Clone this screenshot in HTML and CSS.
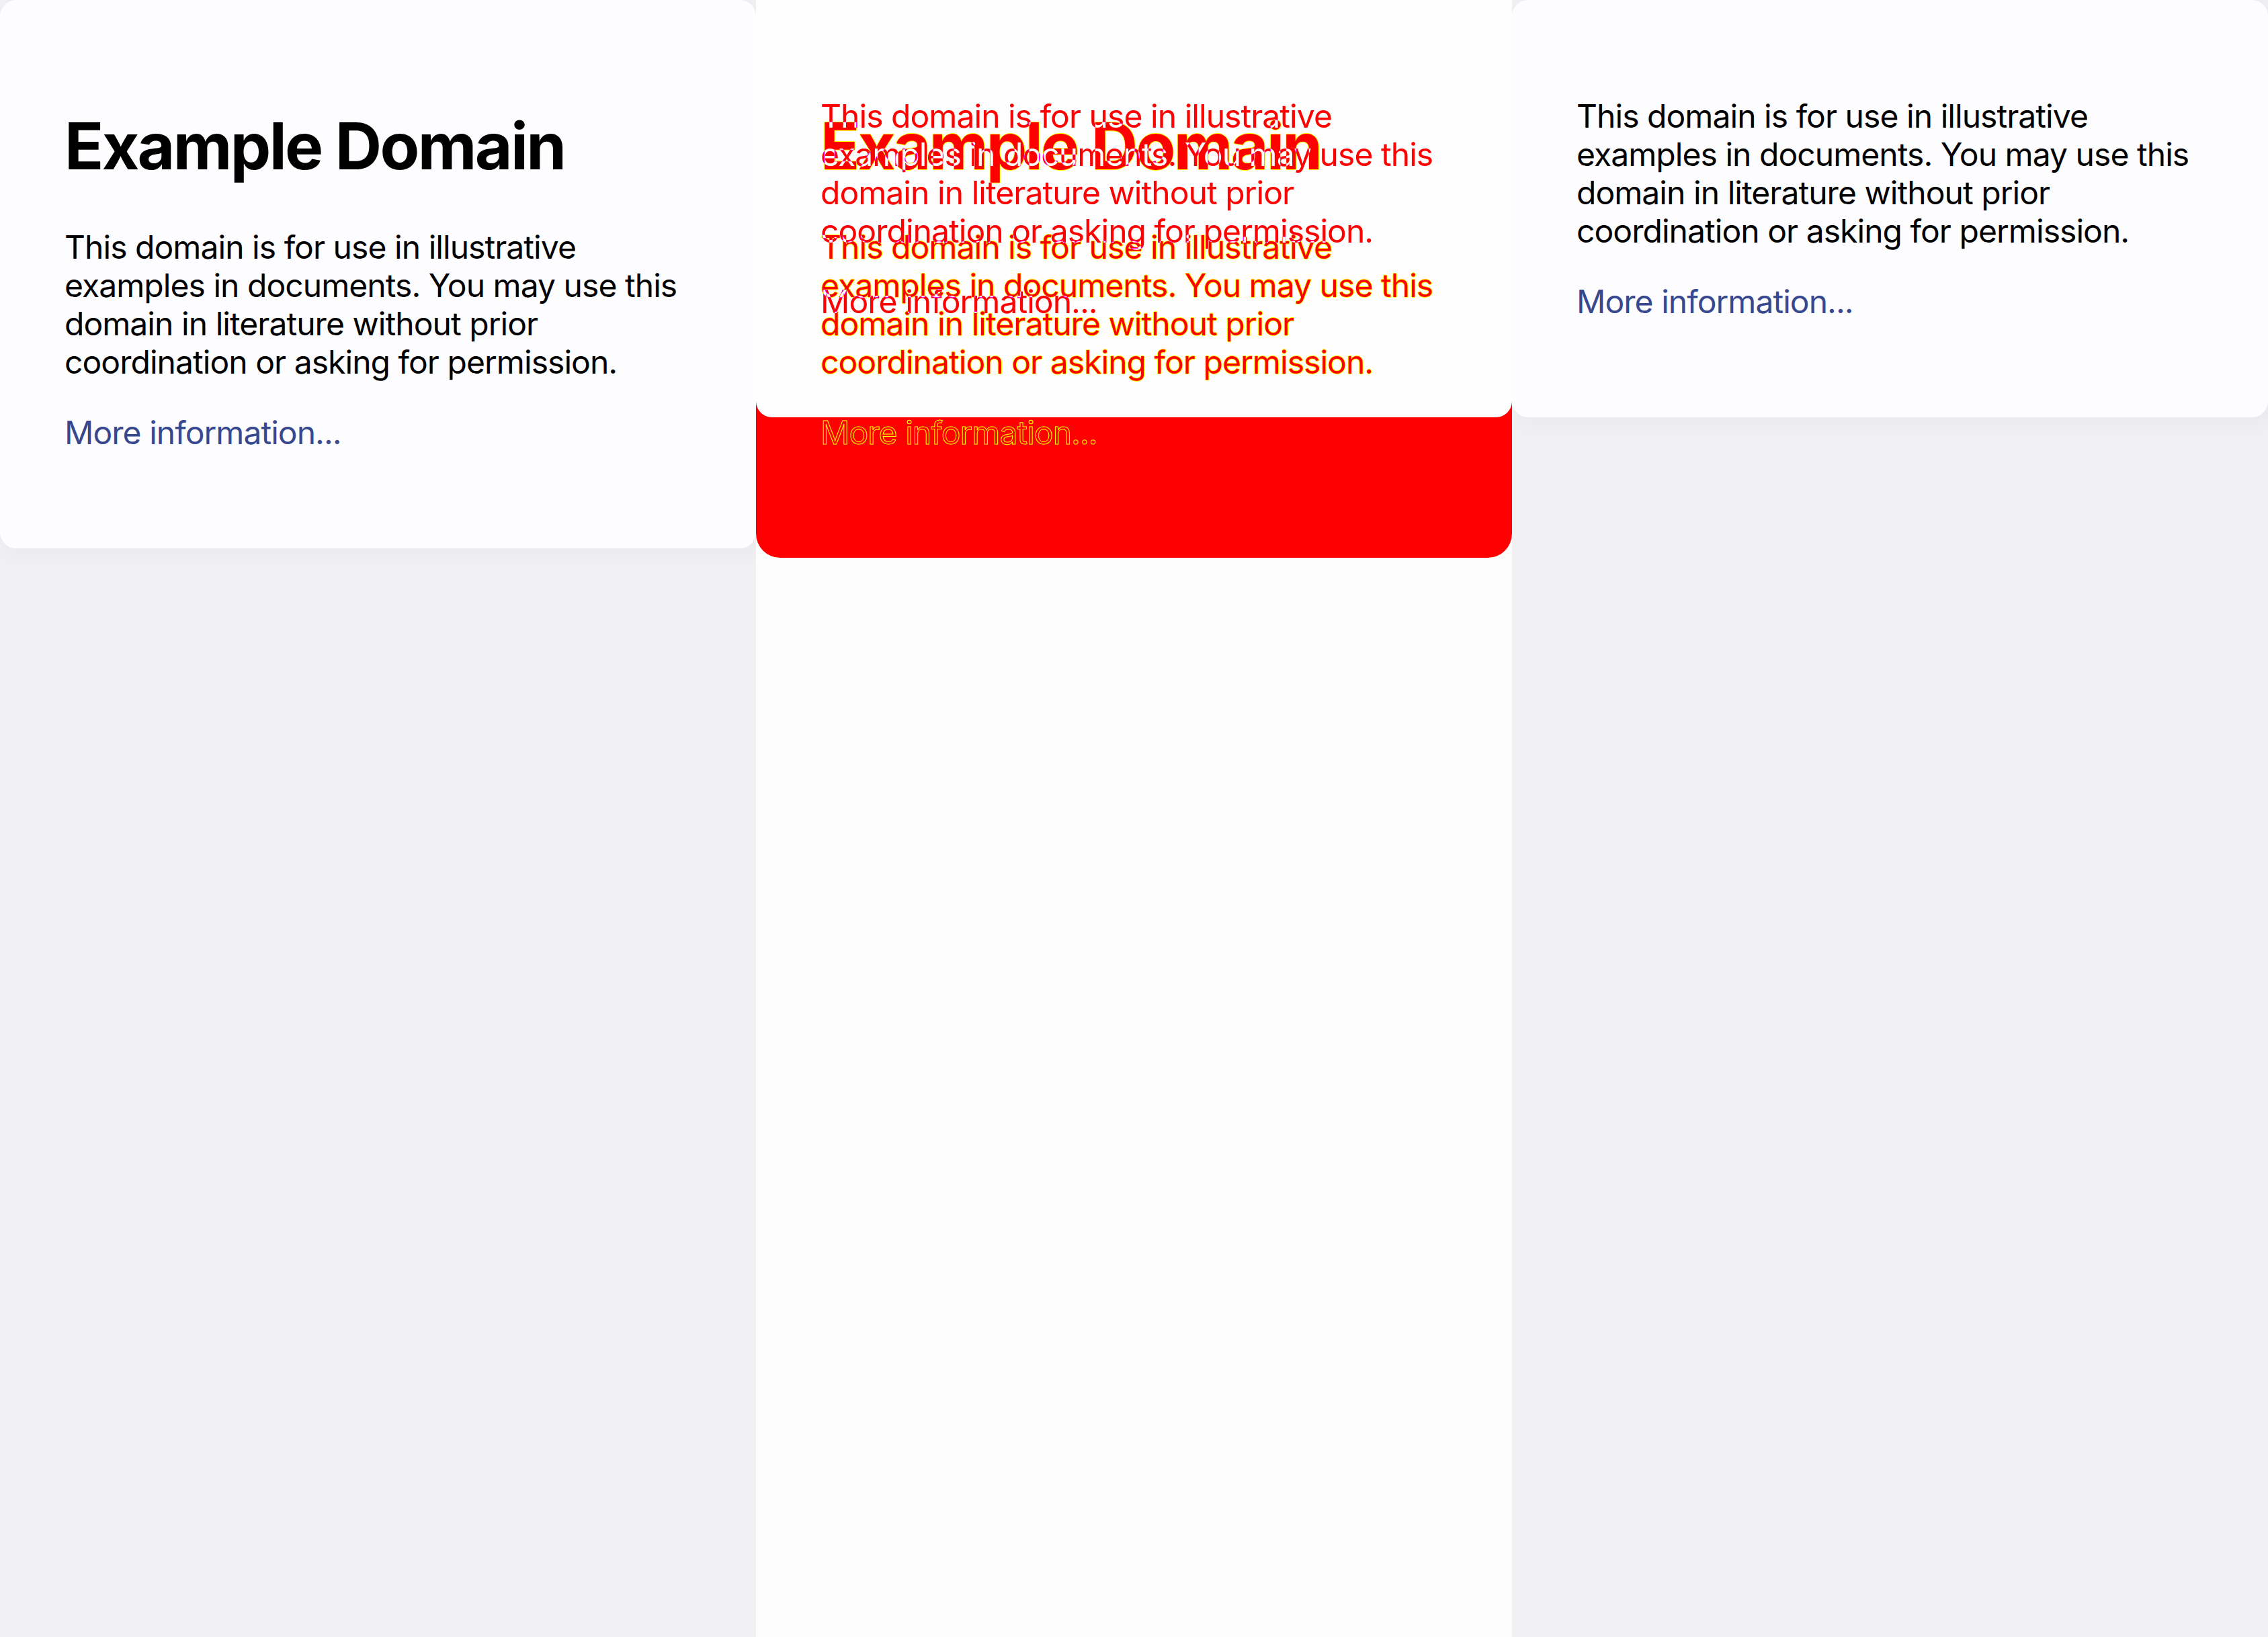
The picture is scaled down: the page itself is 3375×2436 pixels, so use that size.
FILE: index.html
```html
<!DOCTYPE html>
<html lang="en">
<head>
<meta charset="utf-8">
<title>Example Domain – comparison</title>
<link rel="stylesheet" href="styles.css">
</head>
<body>
<main class="shots">
  <section class="pane pane-ref">
    <div class="card">
      <h1>Example Domain</h1>
      <p>This domain is for use in illustrative examples in documents. You may use this domain in literature without prior coordination or asking for permission.</p>
      <p><a href="#">More information...</a></p>
    </div>
  </section>

  <section class="pane pane-diff">
    <div class="diff-stack">
      <div class="diff-red"></div>
      <div class="diff-same"></div>
      <div class="card diff-layer diff-left">
        <h1>Example Domain</h1>
        <p>This domain is for use in illustrative examples in documents. You may use this domain in literature without prior coordination or asking for permission.</p>
        <p><a href="#" class="outline">More information...</a></p>
      </div>
      <div class="card diff-layer diff-right">
        <p>This domain is for use in illustrative examples in documents. You may use this domain in literature without prior coordination or asking for permission.</p>
        <p><a href="#">More information...</a></p>
      </div>
    </div>
  </section>

  <section class="pane pane-cmp">
    <div class="card">
      <p>This domain is for use in illustrative examples in documents. You may use this domain in literature without prior coordination or asking for permission.</p>
      <p><a href="#">More information...</a></p>
    </div>
  </section>
</main>
</body>
</html>
```

FILE: styles.css
```css
* { box-sizing: border-box; }

html, body {
  margin: 0;
  padding: 0;
}

body {
  width: 3375px;
  height: 2436px;
  overflow: hidden;
  font-family: Inter, "Noto Sans", "Liberation Sans", sans-serif;
  color: #000;
  background: #f0f0f2;
}

.shots {
  display: grid;
  grid-template-columns: repeat(3, 1125px);
  height: 2436px;
}

.pane {
  background: #f0f0f2;
}

.pane-diff {
  background: #fdfdfd;
}

.card {
  background: #fdfdff;
  padding: 96px;
  border-radius: 24px;
  box-shadow: 6px 9px 21px 6px rgba(0, 0, 0, 0.02);
}

h1 {
  font-size: 96px;
  line-height: 115px;
  font-weight: 700;
  letter-spacing: -2.6px;
  margin: 64px 0;
}

p {
  font-size: 48px;
  line-height: 57px;
  letter-spacing: -0.95px;
  margin: 48px 0;
}

a {
  color: #38488f;
  text-decoration: none;
}

/* diff pane */
.diff-stack {
  display: grid;
  isolation: isolate;
}

.diff-stack > * {
  grid-area: 1 / 1;
  align-self: start;
}

.diff-red {
  height: 830px;
  background: #ff0000;
  border-radius: 0 0 36px 36px;
}

.diff-same {
  height: 621px;
  background: #fefeff;
  border-radius: 0 0 24px 24px;
}

.diff-layer {
  background: transparent;
  box-shadow: none;
}

.diff-left,
.diff-left a {
  color: #ff0000;
  text-shadow: 1px 0 #ffff00, -1px 0 #ffff00, 0 1px #ffff00, 0 -1px #ffff00;
}

.diff-left a.outline {
  color: transparent;
  text-shadow: none;
  -webkit-text-stroke: 1px #ffff00;
}

.diff-right,
.diff-right a {
  color: #00ffff;
}

.diff-right {
  mix-blend-mode: difference;
}
```
